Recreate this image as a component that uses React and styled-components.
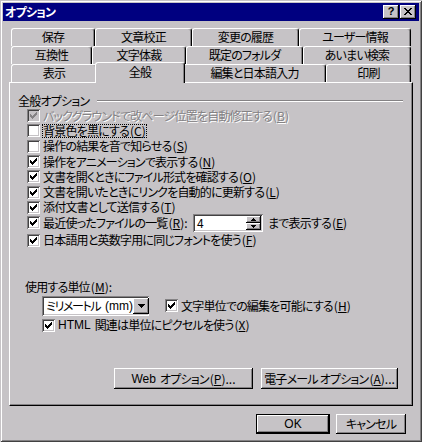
import React from 'react';
import styled, { createGlobalStyle, css } from 'styled-components';

const FACE = '#c6c3c6';
const SHADOW = '#848284';
const DARK = '#424142';
const FONT = `"Noto Sans CJK JP", "Noto Sans", sans-serif`;

const Global = createGlobalStyle`
  html, body { margin: 0; padding: 0; background: ${FACE}; }
  body { font-family: ${FONT}; font-size: 12px; color: #000; }
  * { box-sizing: border-box; }
`;

const Window = styled.div`
  width: 422px;
  height: 442px;
  background: ${FACE};
  padding: 3px;
  display: flex;
  flex-direction: column;
  font-feature-settings: "palt";
  letter-spacing: -0.8px;
  line-height: 1;
  box-shadow: inset 1px 1px 0 ${FACE}, inset -1px -1px 0 ${DARK},
    inset 2px 2px 0 #fff, inset -2px -2px 0 ${SHADOW};
`;

const TitleBar = styled.div`
  height: 18px;
  background: #000080;
  display: flex;
  align-items: center;
  justify-content: space-between;
  padding: 0 3px 0 2px;
`;

const Title = styled.span`
  color: #fff;
  font-weight: bold;
  font-size: 12px;
`;

const TitleButtons = styled.div`
  display: flex;
  gap: 1px;
`;

const raised = css`
  background: ${FACE};
  box-shadow: inset -1px -1px 0 #000, inset 1px 1px 0 #fff,
    inset -2px -2px 0 ${SHADOW}, inset 2px 2px 0 ${FACE};
`;

const CaptionButton = styled.div`
  width: 16px;
  height: 14px;
  ${raised};
  display: flex;
  align-items: center;
  justify-content: center;
  font-family: "Liberation Sans", sans-serif;
  font-weight: bold;
  font-size: 11px;
  letter-spacing: 0;
  padding-bottom: 1px;
`;

const Content = styled.div`
  flex: 1;
  display: flex;
  flex-direction: column;
  padding: 7px 6px 0 6px;
`;

const TabRow = styled.div`
  display: flex;
  height: 18px;
  padding-left: 2px;
`;

const Tab = styled.div`
  width: ${(p) => p.$w}px;
  height: 18px;
  flex: none;
  background: ${FACE};
  border-top: 1px solid #fff;
  border-left: 1px solid #fff;
  border-right: 1px solid #000;
  border-radius: 3px 3px 0 0;
  box-shadow: inset -1px 0 0 ${SHADOW};
  display: flex;
  align-items: center;
  justify-content: center;
  padding-bottom: 1px;
  ${(p) =>
    p.$active &&
    css`
      width: ${p.$w + 4}px;
      height: 21px;
      margin: -2px -2px -1px;
      position: relative;
      z-index: 2;
      padding-bottom: 3px;
    `}
`;

const Panel = styled.div`
  height: 324px;
  flex: none;
  border-top: 1px solid #fff;
  border-left: 1px solid #fff;
  border-right: 1px solid #000;
  border-bottom: 1px solid #000;
  box-shadow: inset -1px -1px 0 ${SHADOW};
  display: flex;
  flex-direction: column;
  padding: 10px 9px 16px 8px;
`;

const SectionHeader = styled.div`
  display: flex;
  align-items: center;
  height: 15px;
`;

const Rule = styled.div`
  flex: 1;
  height: 2px;
  border-top: 1px solid ${SHADOW};
  border-bottom: 1px solid #fff;
  margin-left: 8px;
`;

const OptionList = styled.div`
  display: flex;
  flex-direction: column;
  margin-left: 9px;
`;

const Row = styled.div`
  display: flex;
  align-items: center;
  height: ${(p) => p.$h || 15.3}px;
  margin-top: ${(p) => p.$mt || 0}px;
  margin-left: ${(p) => p.$ml || 0}px;
  white-space: nowrap;
`;

const Box = styled.span`
  width: 13px;
  height: 13px;
  flex: none;
  background: ${(p) => (p.$disabled ? FACE : '#fff')};
  box-shadow: inset 1px 1px 0 ${SHADOW}, inset -1px -1px 0 #fff,
    inset 2px 2px 0 ${DARK}, inset -2px -2px 0 ${FACE};
  display: flex;
  padding: 3px;
  margin-right: 2px;
`;

const Label = styled.span`
  white-space: nowrap;
  padding: 0 1px;
  height: 14px;
  display: inline-flex;
  align-items: center;
  margin-left: ${(p) => p.$ml || 0}px;
  color: ${(p) => (p.$disabled ? SHADOW : '#000')};
  text-shadow: ${(p) => (p.$disabled ? '1px 1px 0 #fff' : 'none')};
  outline: ${(p) => (p.$focus ? '1px dotted #000' : 'none')};
  outline-offset: -1px;
`;

const Key = styled.span`
  letter-spacing: 0;
  margin-left: 1px;
`;

const U = styled.span`
  text-decoration: underline;
  text-underline-offset: 1px;
`;

const FixedLabel = styled.span`
  width: ${(p) => p.$w}px;
  flex: none;
  white-space: nowrap;
  padding-left: 1px;
`;

const Field = styled.div`
  width: ${(p) => p.$w}px;
  height: ${(p) => p.$h}px;
  flex: none;
  background: #fff;
  box-shadow: inset 1px 1px 0 ${SHADOW}, inset -1px -1px 0 #fff,
    inset 2px 2px 0 ${DARK}, inset -2px -2px 0 ${FACE};
  padding: 2px;
  display: flex;
  align-items: stretch;
`;

const FieldText = styled.span`
  flex: 1;
  display: flex;
  align-items: center;
  padding-left: 2px;
  white-space: nowrap;
`;

const Narrow = styled.span`
  letter-spacing: -1.4px;
  margin-right: 5px;
`;

const SpinButtons = styled.div`
  width: 15px;
  display: flex;
  flex-direction: column;
`;

const SpinButton = styled.div`
  flex: 1;
  ${raised};
  display: flex;
  align-items: center;
  justify-content: center;
`;

const DropButton = styled.div`
  width: 16px;
  flex: none;
  ${raised};
  display: flex;
  align-items: center;
  justify-content: center;
`;

const ButtonRow = styled.div`
  display: flex;
  justify-content: flex-end;
  gap: 8px;
  margin-top: auto;
  margin-right: 5px;
`;

const PushButton = styled.div`
  width: ${(p) => p.$w}px;
  height: ${(p) => p.$h || 21}px;
  flex: none;
  ${raised};
  display: flex;
  align-items: center;
  justify-content: center;
  white-space: nowrap;
  ${(p) =>
    p.$default &&
    css`
      border: 1px solid #000;
    `}
`;

const Footer = styled.div`
  display: flex;
  justify-content: flex-end;
  gap: 6px;
  margin-top: 8px;
  margin-right: 7px;
`;

const Latin = styled.span`
  font-family: "Liberation Sans", "Noto Sans CJK JP", sans-serif;
  letter-spacing: 0;
  margin-right: ${(p) => p.$mr || 0}px;
`;

const Check = ({ color = '#000' }) => (
  <svg width="7" height="7" viewBox="0 0 7 7" shapeRendering="crispEdges">
    <path
      fill={color}
      d="M6 0h1v1H6z M5 1h2v1H5z M0 2h1v1H0z M4 2h3v1H4z M0 3h2v1H0z M3 3h3v1H3z M0 4h5v1H0z M1 5h3v1H1z M2 6h1v1H2z"
    />
  </svg>
);

const CloseGlyph = () => (
  <svg width="8" height="7" viewBox="0 0 8 7" shapeRendering="crispEdges">
    <path
      fill="#000"
      d="M0 0h2v1H0z M6 0h2v1H6z M1 1h2v1H1z M5 1h2v1H5z M2 2h4v1H2z M3 3h2v1H3z M2 4h4v1H2z M1 5h2v1H1z M5 5h2v1H5z M0 6h2v1H0z M6 6h2v1H6z"
    />
  </svg>
);

const Arrow = ({ dir = 'down', w = 7 }) => {
  const h = Math.ceil(w / 2);
  const parts = [];
  for (let i = 0; i < h; i++) {
    const y = dir === 'down' ? i : h - 1 - i;
    parts.push(`M${i} ${y}h${w - 2 * i}v1H${i}z`);
  }
  return (
    <svg width={w} height={h} viewBox={`0 0 ${w} ${h}`} shapeRendering="crispEdges">
      <path fill="#000" d={parts.join(' ')} />
    </svg>
  );
};

const CheckBox = ({ checked, disabled }) => (
  <Box $disabled={disabled}>{checked && <Check color={disabled ? SHADOW : '#000'} />}</Box>
);

const Mn = ({ text, k, suffix = '' }) => (
  <>
    {text}
    <Key>
      (<U>{k}</U>){suffix}
    </Key>
  </>
);

const tabRows = [
  [
    { t: '保存', w: 84 },
    { t: '文章校正', w: 97 },
    { t: '変更の履歴', w: 107 },
    { t: 'ユーザー情報', w: 112 },
  ],
  [
    { t: '互換性', w: 81 },
    { t: '文字体裁', w: 94 },
    { t: '既定のフォルダ', w: 117 },
    { t: 'あいまい検索', w: 108 },
  ],
  [
    { t: '表示', w: 86 },
    { t: '全般', w: 86, active: true },
    { t: '編集と日本語入力', w: 143 },
    { t: '印刷', w: 85 },
  ],
];

const options = [
  { t: 'バックグラウンドで改ページ位置を自動修正する', k: 'B', checked: true, disabled: true },
  { t: '背景色を黒にする', k: 'C', focus: true },
  { t: '操作の結果を音で知らせる', k: 'S' },
  { t: '操作をアニメーションで表示する', k: 'N', checked: true },
  { t: '文書を開くときにファイル形式を確認する', k: 'O', checked: true },
  { t: '文書を開いたときにリンクを自動的に更新する', k: 'L', checked: true },
  { t: '添付文書として送信する', k: 'T', checked: true },
];

export default function App() {
  return (
    <>
      <Global />
      <Window>
        <TitleBar>
          <Title>オプション</Title>
          <TitleButtons>
            <CaptionButton>?</CaptionButton>
            <CaptionButton>
              <CloseGlyph />
            </CaptionButton>
          </TitleButtons>
        </TitleBar>
        <Content>
          {tabRows.map((r, i) => (
            <TabRow key={i}>
              {r.map((tab) => (
                <Tab key={tab.t} $w={tab.w} $active={tab.active}>
                  {tab.t}
                </Tab>
              ))}
            </TabRow>
          ))}
          <Panel>
            <SectionHeader>
              <span>全般オプション</span>
              <Rule />
            </SectionHeader>
            <OptionList>
              {options.map((o) => (
                <Row key={o.k}>
                  <CheckBox checked={o.checked} disabled={o.disabled} />
                  <Label $disabled={o.disabled} $focus={o.focus}>
                    <Mn text={o.t} k={o.k} />
                  </Label>
                </Row>
              ))}
              <Row>
                <CheckBox checked />
                <FixedLabel $w={151}>
                  <Mn text="最近使ったファイルの一覧" k="R" suffix=":" />
                </FixedLabel>
                <Field $w={70} $h={18}>
                  <FieldText>4</FieldText>
                  <SpinButtons>
                    <SpinButton>
                      <Arrow dir="up" w={5} />
                    </SpinButton>
                    <SpinButton>
                      <Arrow dir="down" w={5} />
                    </SpinButton>
                  </SpinButtons>
                </Field>
                <Label $ml={4}>
                  <Mn text="まで表示する" k="E" />
                </Label>
              </Row>
              <Row $mt={2}>
                <CheckBox checked />
                <Label>
                  <Mn text="日本語用と英数字用に同じフォントを使う" k="F" />
                </Label>
              </Row>
            </OptionList>
            <Row $mt={32} $ml={7} $h={15}>
              <Mn text="使用する単位" k="M" suffix=":" />
            </Row>
            <Row $mt={1} $ml={24} $h={20}>
              <Field $w={107} $h={20}>
                <FieldText>
                  <Narrow>ミリメートル</Narrow>
                  <Latin>(mm)</Latin>
                </FieldText>
                <DropButton>
                  <Arrow dir="down" w={7} />
                </DropButton>
              </Field>
              <Row $ml={16}>
                <CheckBox checked />
                <Label>
                  <Mn text="文字単位での編集を可能にする" k="H" />
                </Label>
              </Row>
            </Row>
            <Row $mt={2} $ml={24} $h={15}>
              <CheckBox checked />
              <Label>
                <Latin $mr={4}>HTML</Latin>
                <Mn text="関連は単位にピクセルを使う" k="X" />
              </Label>
            </Row>
            <ButtonRow>
              <PushButton $w={139}>
                <Latin $mr={4}>Web</Latin>
                <Mn text="オプション" k="P" suffix="..." />
              </PushButton>
              <PushButton $w={137}>
                電子メール オプション
                <Key>
                  (<U>A</U>)...
                </Key>
              </PushButton>
            </ButtonRow>
          </Panel>
          <Footer>
            <PushButton $w={74} $h={20} $default>
              <Latin>OK</Latin>
            </PushButton>
            <PushButton $w={70} $h={20}>
              キャンセル
            </PushButton>
          </Footer>
        </Content>
      </Window>
    </>
  );
}
